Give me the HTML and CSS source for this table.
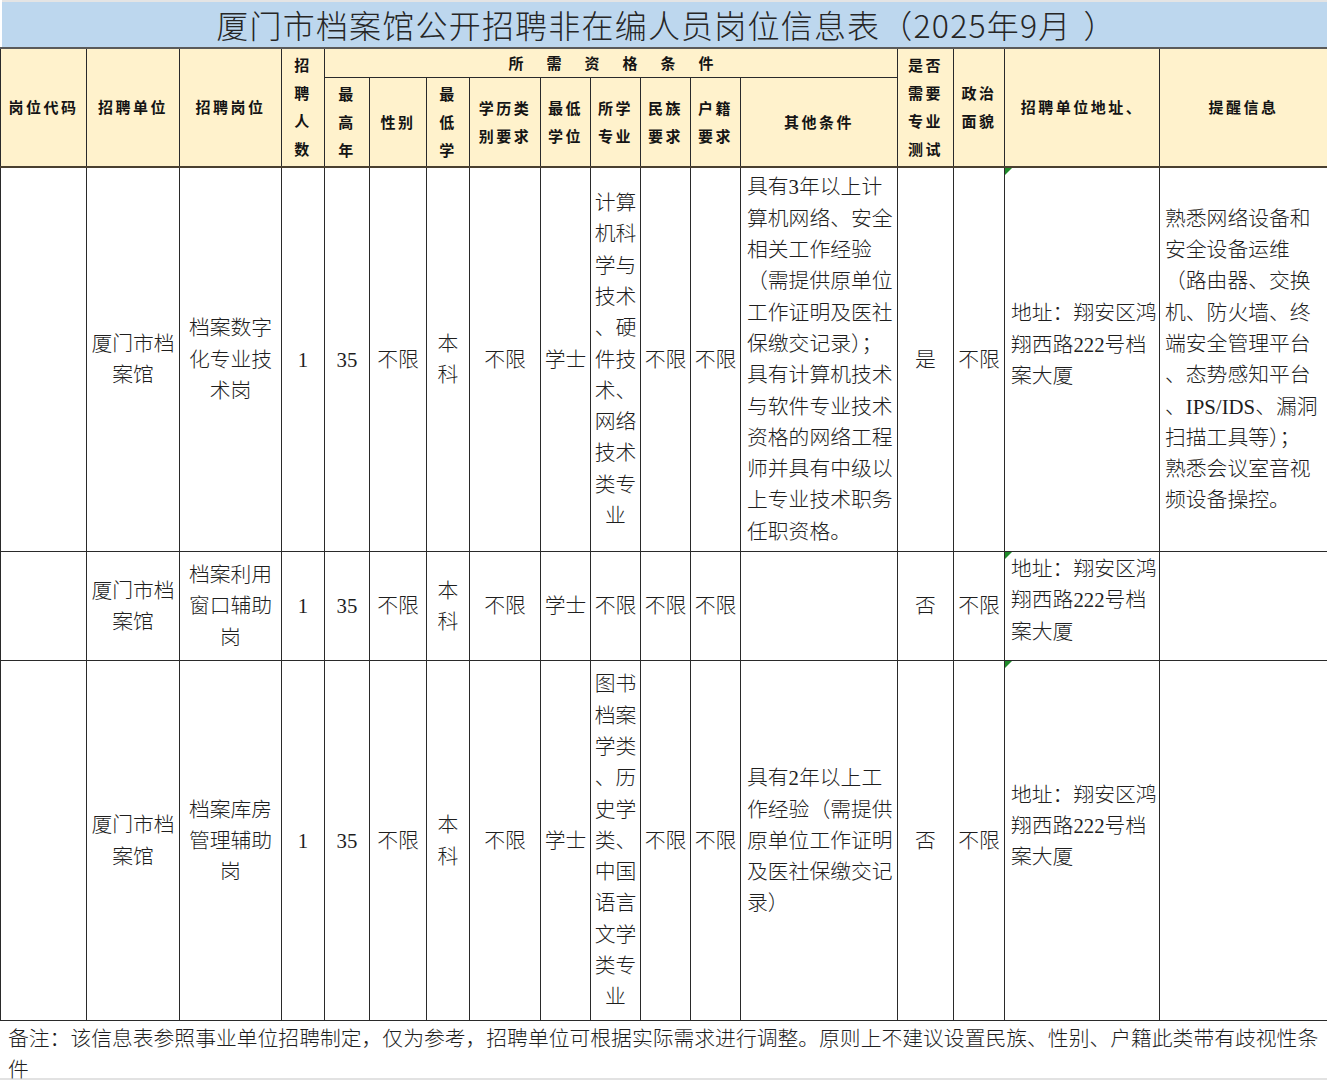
FILE: index.html
```html
<!DOCTYPE html>
<html lang="zh-CN">
<head>
<meta charset="utf-8">
<title>厦门市档案馆公开招聘非在编人员岗位信息表</title>
<link rel="stylesheet" href="styles.css">
</head>
<body>
<div class="sheet">
  <div class="title">厦门市档案馆公开招聘非在编人员岗位信息表（2025年9月<span class="gap"></span>）</div>
  <table class="grid">
    <colgroup>
      <col style="width:86px"><col style="width:93px"><col style="width:102px"><col style="width:43px">
      <col style="width:45px"><col style="width:57px"><col style="width:43px"><col style="width:71px">
      <col style="width:50px"><col style="width:50px"><col style="width:50px"><col style="width:50px">
      <col style="width:157px"><col style="width:56px"><col style="width:51px"><col style="width:155px">
      <col style="width:168px">
    </colgroup>
    <thead>
      <tr class="h1">
        <th rowspan="2">岗位代码</th>
        <th rowspan="2">招聘单位</th>
        <th rowspan="2">招聘岗位</th>
        <th rowspan="2">招<br>聘<br>人<br>数</th>
        <th colspan="9" class="group">所需资格条件</th>
        <th rowspan="2">是否<br>需要<br>专业<br>测试</th>
        <th rowspan="2">政治<br>面貌</th>
        <th rowspan="2">招聘单位地址、</th>
        <th rowspan="2">提醒信息</th>
      </tr>
      <tr class="h2">
        <th>最<br>高<br>年</th>
        <th>性别</th>
        <th>最<br>低<br>学</th>
        <th>学历类<br>别要求</th>
        <th>最低<br>学位</th>
        <th>所学<br>专业</th>
        <th>民族<br>要求</th>
        <th>户籍<br>要求</th>
        <th>其他条件</th>
      </tr>
    </thead>
    <tbody>
      <tr class="r1">
        <td></td>
        <td>厦门市档<br>案馆</td>
        <td>档案数字<br>化专业技<br>术岗</td>
        <td>1</td>
        <td>35</td>
        <td>不限</td>
        <td>本<br>科</td>
        <td>不限</td>
        <td>学士</td>
        <td class="major">计算<br>机科<br>学与<br>技术<br>、硬<br>件技<br>术、<br>网络<br>技术<br>类专<br>业</td>
        <td>不限</td>
        <td>不限</td>
        <td class="left">具有3年以上计<br>算机网络、安全<br>相关工作经验<br>（需提供原单位<br>工作证明及医社<br>保缴交记录）；<br>具有计算机技术<br>与软件专业技术<br>资格的网络工程<br>师并具有中级以<br>上专业技术职务<br>任职资格。</td>
        <td>是</td>
        <td>不限</td>
        <td class="left addr"><span class="flag"></span>地址：翔安区鸿<br>翔西路222号档<br>案大厦</td>
        <td class="left tip">熟悉网络设备和<br>安全设备运维<br>（路由器、交换<br>机、防火墙、终<br>端安全管理平台<br>、态势感知平台<br>、IPS/IDS、漏洞<br>扫描工具等）；<br>熟悉会议室音视<br>频设备操控。</td>
      </tr>
      <tr class="r2">
        <td></td>
        <td>厦门市档<br>案馆</td>
        <td>档案利用<br>窗口辅助<br>岗</td>
        <td>1</td>
        <td>35</td>
        <td>不限</td>
        <td>本<br>科</td>
        <td>不限</td>
        <td>学士</td>
        <td>不限</td>
        <td>不限</td>
        <td>不限</td>
        <td class="left"></td>
        <td>否</td>
        <td>不限</td>
        <td class="left addr tight"><span class="flag"></span>地址：翔安区鸿<br>翔西路222号档<br>案大厦</td>
        <td class="left tip"></td>
      </tr>
      <tr class="r3">
        <td></td>
        <td>厦门市档<br>案馆</td>
        <td>档案库房<br>管理辅助<br>岗</td>
        <td>1</td>
        <td>35</td>
        <td>不限</td>
        <td>本<br>科</td>
        <td>不限</td>
        <td>学士</td>
        <td class="major">图书<br>档案<br>学类<br>、历<br>史学<br>类、<br>中国<br>语言<br>文学<br>类专<br>业</td>
        <td>不限</td>
        <td>不限</td>
        <td class="left">具有2年以上工<br>作经验（需提供<br>原单位工作证明<br>及医社保缴交记<br>录）</td>
        <td>否</td>
        <td>不限</td>
        <td class="left addr"><span class="flag"></span>地址：翔安区鸿<br>翔西路222号档<br>案大厦</td>
        <td class="left tip"></td>
      </tr>
    </tbody>
  </table>
  <div class="note">备注：该信息表参照事业单位招聘制定，仅为参考，招聘单位可根据实际需求进行调整。原则上不建议设置民族、性别、户籍此类带有歧视性条<br>件</div>
</div>
</body>
</html>
```

FILE: styles.css
```css
html, body {
  margin: 0;
  padding: 0;
  background: #ffffff;
}

.sheet {
  width: 1327px;
  display: flex;
  flex-direction: column;
}

.title {
  height: 45px;
  border-top: 2px solid #e4e4e4;
  margin-left: 2px;
  background: #bdd7ee;
  color: #262626;
  font-family: "Noto Sans CJK SC", "Noto Sans", sans-serif;
  font-size: 32px;
  font-weight: 300;
  letter-spacing: 1.2px;
  line-height: 45px;
  text-align: center;
  padding-left: 4px;
}

.title .gap {
  display: inline-block;
  width: 12px;
}

.grid {
  width: 1327px;
  table-layout: fixed;
  border-collapse: collapse;
  font-family: "Liberation Serif", "Noto Sans CJK SC", serif;
  color: #1e1e1e;
}

.grid th,
.grid td {
  border: 1.5px solid #2a2a2a;
  padding: 0;
  text-align: center;
  vertical-align: middle;
  white-space: nowrap;
  overflow: hidden;
}

.grid thead tr.h1 th {
  border-top: 2px solid #5a5a5a;
}

.grid thead tr.h1 th[rowspan],
.grid thead tr.h2 th {
  border-bottom: 2px solid #4a4030;
}

.grid th {
  background: #fff2cc;
  font-family: "Noto Sans CJK SC", sans-serif;
  font-weight: 700;
  font-size: 15px;
  letter-spacing: 2.5px;
  line-height: 28px;
  color: #141414;
}

.grid tr.h1 {
  height: 29px;
}

.grid tr.h2 {
  height: 89px;
}

.grid th.group {
  letter-spacing: 23px;
  padding-left: 23px;
}

.grid td {
  font-size: 20.8px;
  font-weight: 300;
  line-height: 31.3px;
  background: #ffffff;
}

.grid tr.r1 { height: 385px; }
.grid tr.r2 { height: 109px; }
.grid tr.r3 { height: 360px; }

.grid td.left {
  text-align: left;
  padding-left: 6px;
}

.grid td.tip {
  padding-left: 5px;
}

.grid td.addr {
  position: relative;
  padding-bottom: 30px;
}

.grid td.addr.tight {
  padding-bottom: 12px;
}

.flag {
  position: absolute;
  left: 0;
  top: 0;
  width: 0;
  height: 0;
  border-top: 7px solid #1f8a2a;
  border-right: 7px solid transparent;
}

.note {
  height: 55px;
  padding: 2px 0 0 8px;
  border-bottom: 3px solid #e2e2e2;
  font-family: "Liberation Serif", "Noto Sans CJK SC", serif;
  font-size: 20.8px;
  font-weight: 300;
  line-height: 31px;
  color: #1e1e1e;
  white-space: nowrap;
}
```
